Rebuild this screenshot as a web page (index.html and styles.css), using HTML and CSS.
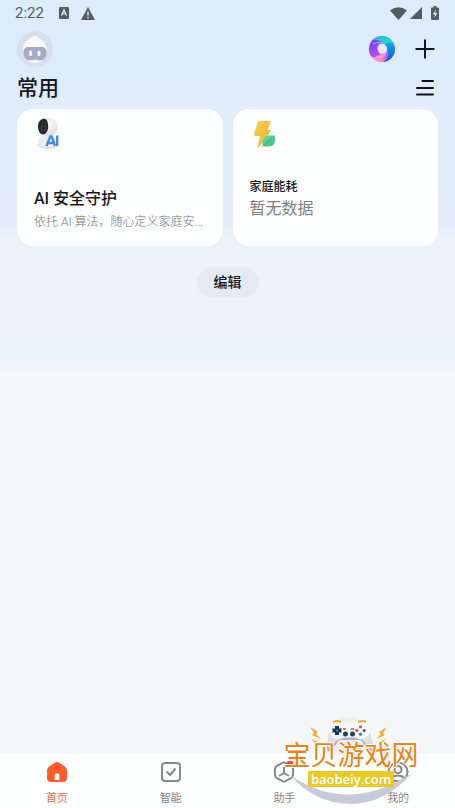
FILE: index.html
```html
<!DOCTYPE html>
<html lang="zh-CN">
<head>
    <meta charset="UTF-8">
    <meta name="viewport" content="width=device-width, initial-scale=1.0">
    <title>首页</title>
    <link rel="stylesheet" href="styles.css">
</head>
<body>

    <div class="status-bar">
        <span class="time">2:22</span>
        <svg class="status-app" width="10" height="12" viewBox="0 0 10 12">
            <rect width="10" height="12" rx="1" fill="#555b63"/>
            <path d="M2.500 8.500 5 2.800l2.500 5.700M3.400 6.700h3.200" fill="none" stroke="#e4ecf6" stroke-width="1.300"/>
        </svg>
        <svg width="14" height="13" viewBox="0 0 14 13">
            <path d="M7 0 14 13H0z" fill="#555b63"/>
            <path d="M7 4.500v4M7 9.700v1.500" stroke="#e4ecf6" stroke-width="1.400"/>
        </svg>
        <div class="status-right">
            <svg width="17" height="13" viewBox="0 0 17 13">
                <path d="M0 3.500Q8.500-3 17 3.500L8.500 13z" fill="#555b63"/>
            </svg>
            <svg class="signal" width="12" height="12" viewBox="0 0 12 12">
                <path d="M12 0v12H0z" fill="#555b63"/>
            </svg>
            <svg width="8" height="14" viewBox="0 0 8 14">
                <path d="M2.500 0h3v1.500H7a1 1 0 0 1 1 1V13a1 1 0 0 1-1 1H1a1 1 0 0 1-1-1V2.500a1 1 0 0 1 1-1h1.500z" fill="#555b63"/>
                <path d="M5 3.500 1.700 8.500H4L3.200 12l3.200-5H4.200z" fill="#e4ecf6"/>
            </svg>
        </div>
    </div>

    <header class="top-bar">
        <button class="avatar" aria-label="个人资料">
            <svg width="36" height="36" viewBox="0 0 36 36">
                <circle cx="18" cy="18" r="18" fill="#d7dfec"/>
                <path d="M6 20C6 13 9 10 13 7c2-1.500 3-2.500 5-2.500 1 0 1.500 1 2.500 1.500C26 9 30 13 30 20c0 7-5 12-12 12S6 27 6 20z" fill="#f8fafd"/>
                <path d="M12 16h12c4 0 5.500 2 5.500 5.500 0 5-2.500 8-6.500 8-2 0-3-1-5-1s-3 1-5 1c-4 0-6.500-3-6.500-8C6.500 18 8 16 12 16z" fill="#a3abc5"/>
                <rect x="12" y="19.500" width="3" height="5.500" rx="1.500" fill="#f4f6fb"/>
                <rect x="20.500" y="19.500" width="3" height="5.500" rx="1.500" fill="#f4f6fb"/>
            </svg>
        </button>
        <div class="top-actions">
            <button class="icon-button" aria-label="语音助手">
                <svg width="26" height="26" viewBox="0 0 26 26" fill="none">
                    <defs>
                        <linearGradient id="swirl-a" x1="0" y1="0" x2="1" y2="1">
                            <stop offset="0" stop-color="#3aa5e6"/>
                            <stop offset=".6" stop-color="#20e0c0"/>
                            <stop offset="1" stop-color="#22c3d8"/>
                        </linearGradient>
                        <linearGradient id="swirl-b" x1="0" y1="0" x2="0" y2="1">
                            <stop offset="0" stop-color="#12a7ea"/>
                            <stop offset="1" stop-color="#0b53dd"/>
                        </linearGradient>
                        <linearGradient id="swirl-c" x1="1" y1="0" x2="0" y2="0">
                            <stop offset="0" stop-color="#8f62e8"/>
                            <stop offset=".4" stop-color="#ff86bb"/>
                            <stop offset="1" stop-color="#f4a0ed"/>
                        </linearGradient>
                        <linearGradient id="swirl-d" x1="0" y1="1" x2="0" y2="0">
                            <stop offset="0" stop-color="#c04af3"/>
                            <stop offset="1" stop-color="#6d44ef"/>
                        </linearGradient>
                    </defs>
                    <circle cx="13" cy="13" r="9" stroke="#8a7bea" stroke-width="8"/>
                    <path d="M3.800 3.800A13 13 0 0 1 22.200 3.800Q25 7 25.500 11 22 6 16.500 8.500 10 3 3.800 3.800z" fill="url(#swirl-a)"/>
                    <path d="M16 8Q24 4 25.900 11.500A13 13 0 0 1 14 26Q22 21 18 13 18 10 16 8z" fill="url(#swirl-b)"/>
                    <path d="M18 13Q22 22 14 26A13 13 0 0 1 2.500 20.500Q9 22 10.500 17.500 16 19 18 13z" fill="url(#swirl-c)"/>
                    <path d="M11 18Q8 23 2.500 20.500A13 13 0 0 1 3.800 3.800Q8 3 13 6 5 10 11 18z" fill="url(#swirl-d)"/>
                    <path d="M4 8Q11 5 15 8.500M17.500 15Q15 23 7 20" stroke="#fff" stroke-opacity=".35" stroke-width="1.500"/>
                    <circle cx="13.500" cy="13" r="4.700" fill="#e1eaf9"/>
                </svg>
            </button>
            <button class="icon-button" aria-label="添加">
                <svg width="20" height="20" viewBox="0 0 20 20">
                    <path d="M10 .5v19M.5 10h19" stroke="#15181c" stroke-width="2"/>
                </svg>
            </button>
        </div>
    </header>

    <main>
        <div class="title-row">
            <h1>常用</h1>
            <button class="icon-button" aria-label="菜单">
                <svg width="18" height="18" viewBox="0 0 18 18">
                    <path d="M6.500 2H17M1 9h16M1 15.500h16" stroke="#111" stroke-width="2" stroke-linecap="round"/>
                </svg>
            </button>
        </div>

        <div class="cards">
            <a href="#" class="card">
                <svg class="card-icon" width="32" height="32" viewBox="0 0 32 32">
                    <defs>
                        <radialGradient id="cam-head" cx=".5" cy=".35" r=".65">
                            <stop offset="0" stop-color="#fbfafa"/>
                            <stop offset="1" stop-color="#dedcdd"/>
                        </radialGradient>
                    </defs>
                    <path d="M4 24q0-6 9-6t10 6v4q-3 3.500-10 3.500T4 28z" fill="#efedee"/>
                    <path d="M4 27v1q3 3 10 3t9-2" fill="none" stroke="#d5d2d3"/>
                    <circle cx="14" cy="10" r="9.500" fill="url(#cam-head)"/>
                    <path d="M9.500 1.800c3.500-.8 4.700 3.700 4.700 7.700s-2 8-5.200 8-5-4-5-8 2-7 5.500-7.700z" fill="#29292d"/>
                    <circle cx="9.500" cy="11" r="3" fill="#38383d"/>
                    <circle cx="9.500" cy="11" r="1" fill="#111"/>
                    <path d="M12.500 29 16.300 19.500h1.400l3.300 9.500M14.500 26h5M23.200 18.500V29" fill="none" stroke="#3e8ee0" stroke-width="2.400"/>
                </svg>
                <div class="card-text">
                    <h2>AI 安全守护</h2>
                    <p class="card-desc">依托 AI 算法，随心定义家庭安...</p>
                </div>
            </a>
            <a href="#" class="card">
                <svg class="card-icon" width="32" height="32" viewBox="0 0 32 32">
                    <defs>
                        <linearGradient id="bolt" x1="0" y1="0" x2="1" y2="1">
                            <stop offset="0" stop-color="#f1ce4b"/>
                            <stop offset="1" stop-color="#f0b72c"/>
                        </linearGradient>
                        <linearGradient id="leaf" x1="0" y1="0" x2="1" y2="1">
                            <stop offset="0" stop-color="#73d9a4"/>
                            <stop offset="1" stop-color="#3fbc84"/>
                        </linearGradient>
                    </defs>
                    <path d="M9.500 4h10q1.500 0 1 1.500L17.500 13H20q1.500 0 .5 1.500L9 30q-1.500 1.500-1.500-.5L10 19H5.500q-2 0-1.500-2L7.500 6q.5-2 2-2z" fill="url(#bolt)"/>
                    <path d="M12.500 29.500v-4q0-7 6-7H25v4q0 7-6 7z" fill="url(#leaf)"/>
                    <path d="M14.500 28.500q2-4.500 7-6.500" fill="none" stroke="#3cab79"/>
                </svg>
                <div class="card-text">
                    <h3>家庭能耗</h3>
                    <p class="card-value">暂无数据</p>
                </div>
            </a>
        </div>

        <button class="edit-button">编辑</button>
    </main>

    <nav class="tab-bar">
        <a href="#" class="tab active">
            <svg width="22" height="22" viewBox="0 0 22 22">
                <path d="M9 1.600q2-1.400 4 0l6 4.200q2 1.400 2 3.700V17q0 4-4 4H5q-4 0-4-4V9.500q0-2.300 2-3.700z" fill="#ff5a2a"/>
                <path d="M8.700 19v-4.500a2.300 2.300 0 0 1 4.600 0V19z" fill="#fff"/>
            </svg>
            <span>首页</span>
        </a>
        <a href="#" class="tab">
            <svg width="22" height="22" viewBox="0 0 22 22" fill="none" stroke="#888" stroke-width="2">
                <rect x="2" y="2" width="18" height="18" rx="3"/>
                <path d="m6.500 10.500 3.500 3.500 5.500-6.500"/>
            </svg>
            <span>智能</span>
        </a>
        <a href="#" class="tab">
            <svg width="22" height="22" viewBox="0 0 22 22" fill="none" stroke="#888" stroke-width="2">
                <path d="M9.500 1.800q1.500-.8 3 0l6 3.400q1.500.8 1.500 2.500v6.600q0 1.700-1.500 2.500l-6 3.400q-1.500.8-3 0l-6-3.400Q2 16 2 14.300V7.700q0-1.700 1.500-2.500z"/>
                <path d="M11 6v6M11 12l-5 3M11 12l5 3"/>
                <circle cx="17" cy="3" r="3.500" fill="#f8473d" stroke="none"/>
            </svg>
            <span>助手</span>
        </a>
        <a href="#" class="tab">
            <svg width="22" height="22" viewBox="0 0 22 22" fill="none" stroke="#888" stroke-width="2">
                <circle cx="11" cy="11" r="9.500"/>
                <circle cx="11" cy="8.500" r="3.500"/>
                <path d="M4.500 17.500q2-3 6.500-3t6.500 3"/>
            </svg>
            <span>我的</span>
        </a>
    </nav>

    <div class="watermark">
        <svg class="watermark-art" width="138" height="90" viewBox="0 0 138 90">
            <circle cx="67" cy="20" r="20" fill="#eeeeef"/>
            <path d="M8 58Q66 98 130 56 103 87 68 87 32 86 8 58z" fill="#c9cad9"/>
            <path d="M53 7q-4 0-5 6l-3 16q-1 7 4 5l8-11h22l8 11q5 2 4-5L87 13q-1-6-5-6z" fill="#aeb0c6"/>
            <path d="M54 5.500h27q6.500 0 7 8 0 8-8 9-4 0-7-2H62q-3 2-7 2-8-1-8-9 .5-8 7-8z" fill="#f8f7fb"/>
            <path d="M47 16 45.500 28q0 4 3 2l8-8q-7-1-9.500-6zM88 16l2.500 12q0 4-3 2l-8-8q6-1 8.500-6z" fill="#dfdfe9"/>
            <path d="M51 5q4-2 8 0M76 5q4-2 8 0" fill="none" stroke="#f0ad34" stroke-width="2"/>
            <path d="M55 9v9M50.500 13.500h9" stroke="#193a55" stroke-width="4"/>
            <circle cx="55" cy="13.500" r="1" fill="#7992a3"/>
            <circle cx="78.500" cy="9.800" r="1.600" fill="#e44a46"/>
            <circle cx="78.500" cy="17.200" r="1.600" fill="#238b91"/>
            <circle cx="74.800" cy="13.500" r="1.600" fill="#e44a46"/>
            <circle cx="82.200" cy="13.500" r="1.600" fill="#25697f"/>
            <path d="M61 12h3M69 12h3" stroke="#df4352" stroke-width="1.500"/>
            <circle cx="63.500" cy="17" r="2.500" fill="#254358"/>
            <circle cx="70.500" cy="17" r="2.500" fill="#254358"/>
            <path d="M28 10l8 5-2 2 5 5-9-4 2-2zM29 22l7 3-3 1M105 10l-8 5 2 2-5 5 9-4-2-2zM104 22l-7 3 3 1" fill="#f0ad27"/>
        </svg>
        <div class="watermark-name">宝贝游戏网</div>
        <div class="watermark-site">baobeiy.com</div>
    </div>

</body>
</html>
```

FILE: styles.css
```css
* {
    box-sizing: border-box;
}

body {
    position: relative;
    display: flex;
    flex-direction: column;
    min-height: 100vh;
    margin: 0;
    font-family: Roboto, "Noto Sans CJK SC", sans-serif;
    color: #15181c;
    background: #f5f6f8 linear-gradient(#deebfb 0, #deebfb 85px, #e1edfb 110px, #e3edfb 225px, #ebf2fa 240px, #ebf3fb 350px, #eff5f9 362px, #f5f7f9 374px, #f5f6f8 390px) no-repeat;
}

h1, h2, h3, p {
    margin: 0;
}

a {
    color: inherit;
    text-decoration: none;
}

button {
    padding: 0;
    border: none;
    background: none;
    font-family: inherit;
    color: inherit;
    cursor: pointer;
}

svg {
    display: block;
    flex-shrink: 0;
}

/* Status bar */
.status-bar {
    display: flex;
    align-items: center;
    height: 26px;
    padding: 0 16px 0 15px;
    color: #555b63;
}

.time {
    font-size: 15px;
    line-height: 26px;
}

.status-app {
    margin: 0 12px 0 15px;
}

.status-right {
    display: flex;
    align-items: center;
    margin-left: auto;
}

.signal {
    margin: 0 9px 0 3px;
}

/* Header */
.top-bar {
    display: flex;
    align-items: center;
    justify-content: space-between;
    height: 46px;
    padding: 0 20px 0 17px;
}

.top-actions {
    display: flex;
    align-items: center;
    gap: 20px;
}

main {
    flex: 1;
    padding: 0 17px;
}

.title-row {
    display: flex;
    align-items: center;
    justify-content: space-between;
    height: 32px;
    margin-bottom: 5px;
    padding-right: 4px;
}

h1 {
    font-size: 21px;
    line-height: 32px;
    font-weight: 500;
}

/* Cards */
.cards {
    display: grid;
    grid-template-columns: 1fr 1fr;
    gap: 10px;
}

.card {
    display: flex;
    flex-direction: column;
    justify-content: space-between;
    min-width: 0;
    height: 137px;
    padding: 8px 17px 15px;
    border-radius: 16px;
    background: #fdfefe;
}

.card:last-child {
    padding-bottom: 25px;
}

h2 {
    margin-bottom: 2px;
    font-size: 16px;
    line-height: 24px;
    font-weight: 500;
}

h3 {
    font-size: 12px;
    line-height: 20px;
    font-weight: 500;
}

.card-desc {
    font-size: 12px;
    line-height: 18px;
    font-weight: 300;
    color: #777;
    white-space: nowrap;
}

.card-value {
    font-size: 16px;
    line-height: 24px;
    color: #808080;
}

.edit-button {
    display: block;
    margin: 21px auto;
    padding: 0 17px;
    border-radius: 15px;
    background: #e4eaf3;
    font-size: 14px;
    line-height: 30px;
    font-weight: 500;
}

/* Bottom tabs */
.tab-bar {
    display: flex;
    height: 54px;
    background: #fdfefe;
}

.tab {
    display: flex;
    flex: 1;
    flex-direction: column;
    align-items: center;
    gap: 8px;
    padding-top: 7px;
    font-size: 11px;
    line-height: 16px;
    color: #888;
}

.tab.active {
    color: #ee6a48;
}

/* Watermark sits over the tab bar */
.watermark {
    position: absolute;
    right: 35px;
    bottom: 1px;
    display: flex;
    flex-direction: column;
    align-items: center;
    width: 138px;
    height: 90px;
    padding-top: 24px;
    pointer-events: none;
}

.watermark-art {
    position: absolute;
    top: 0;
    left: 0;
}

.watermark-name {
    position: relative;
    font-size: 27px;
    line-height: 30px;
    color: #ea8418;
    text-shadow: 1px 0 #fff, -1px 0 #fff, 0 1px #fff, 0 -1px #fff;
    white-space: nowrap;
}

.watermark-site {
    position: relative;
    padding: 0 3px;
    background: #e8c926;
    font-family: "Open Sans", sans-serif;
    font-size: 13px;
    line-height: 16px;
    font-weight: 600;
    color: #fff;
}
```
